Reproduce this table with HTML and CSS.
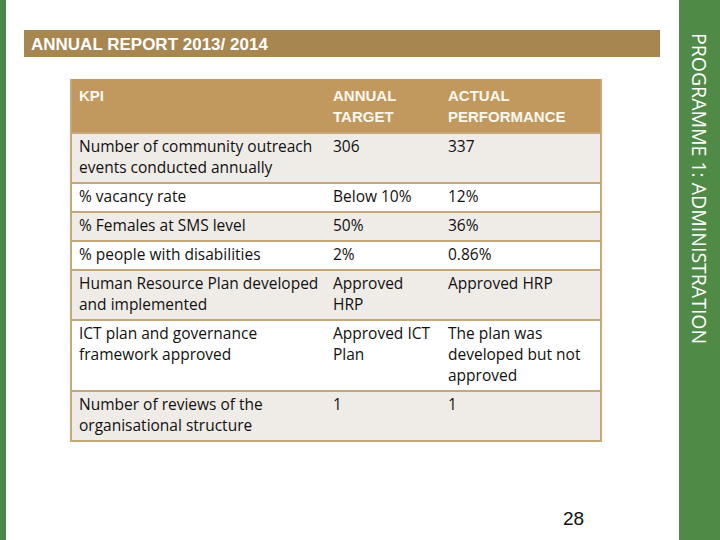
FILE: index.html
```html
<!DOCTYPE html>
<html>
<head>
<meta charset="utf-8">
<link rel="stylesheet" href="styles.css">
</head>
<body>
<div class="page">
  <div class="left-strip"></div>
  <main class="main">
    <h1 class="title">ANNUAL REPORT 2013/ 2014</h1>
    <table class="kpi">
      <colgroup>
        <col class="c1"><col class="c2"><col class="c3">
      </colgroup>
      <thead>
        <tr><th>KPI</th><th>ANNUAL<br>TARGET</th><th>ACTUAL<br>PERFORMANCE</th></tr>
      </thead>
      <tbody>
        <tr class="shade"><td>Number of community outreach events conducted annually</td><td>306</td><td>337</td></tr>
        <tr><td>% vacancy rate</td><td>Below 10%</td><td>12%</td></tr>
        <tr class="shade"><td>% Females at SMS level</td><td>50%</td><td>36%</td></tr>
        <tr><td>% people with disabilities</td><td>2%</td><td>0.86%</td></tr>
        <tr class="shade"><td>Human Resource Plan developed and implemented</td><td>Approved HRP</td><td>Approved HRP</td></tr>
        <tr><td>ICT plan and governance framework approved</td><td>Approved ICT Plan</td><td>The plan was developed but not approved</td></tr>
        <tr class="shade"><td>Number of reviews of the organisational structure</td><td>1</td><td>1</td></tr>
      </tbody>
    </table>
    <div class="page-num">28</div>
  </main>
  <aside class="side">
    <span class="side-text">PROGRAMME 1: ADMINISTRATION</span>
  </aside>
</div>
</body>
</html>
```

FILE: styles.css
```css
html, body {
  margin: 0;
  padding: 0;
  background: #ffffff;
}
body {
  font-family: "Open Sans", "Liberation Sans", sans-serif;
}
.page {
  display: flex;
  width: 720px;
  height: 540px;
  overflow: hidden;
}
.left-strip {
  width: 6px;
  flex: none;
  background: #4c8646;
}
.main {
  flex: 1;
  position: relative;
  padding-top: 30px;
}
.title {
  margin: 0 0 22px 18px;
  width: 636px;
  height: 27px;
  box-sizing: border-box;
  background: #a8864f;
  color: #ffffff;
  font-family: "Liberation Sans", sans-serif;
  font-weight: bold;
  font-size: 17px;
  line-height: 29px;
  padding-left: 7px;
}
.kpi {
  margin-left: 64px;
  width: 530px;
  border-collapse: collapse;
  table-layout: fixed;
  font-size: 15.5px;
  color: #111111;
  border-left: 2px solid #c4a77a;
  border-right: 2px solid #c4a77a;
  border-bottom: 2px solid #c4a77a;
}
.c1 { width: 255px; }
.c2 { width: 115px; }
.c3 { width: 160px; }
.kpi th {
  background: #c1995e;
  color: #fdf8ee;
  text-align: left;
  font-family: "Liberation Sans", sans-serif;
  font-weight: bold;
  font-size: 15px;
  line-height: 21px;
  vertical-align: top;
  padding: 6px 6px 5px 7px;
  height: 42px;
}
.kpi td {
  vertical-align: top;
  line-height: 21px;
  padding: 2px 4px 4px 7px;
  border-top: 2px solid #c4a77a;
}
.kpi td:nth-child(2) {
  padding-right: 8px;
}
.kpi tr.shade td {
  background: #efebe7;
}
.page-num {
  position: absolute;
  left: 557px;
  top: 508px;
  font-family: "Liberation Sans", sans-serif;
  font-size: 19px;
  color: #111111;
}
.side {
  width: 41px;
  flex: none;
  background: #4f8a47;
  display: flex;
  justify-content: center;
}
.side-text {
  writing-mode: vertical-rl;
  color: #ffffff;
  font-family: "Open Sans", sans-serif;
  font-size: 19.5px;
  margin-top: 33px;
}
```
